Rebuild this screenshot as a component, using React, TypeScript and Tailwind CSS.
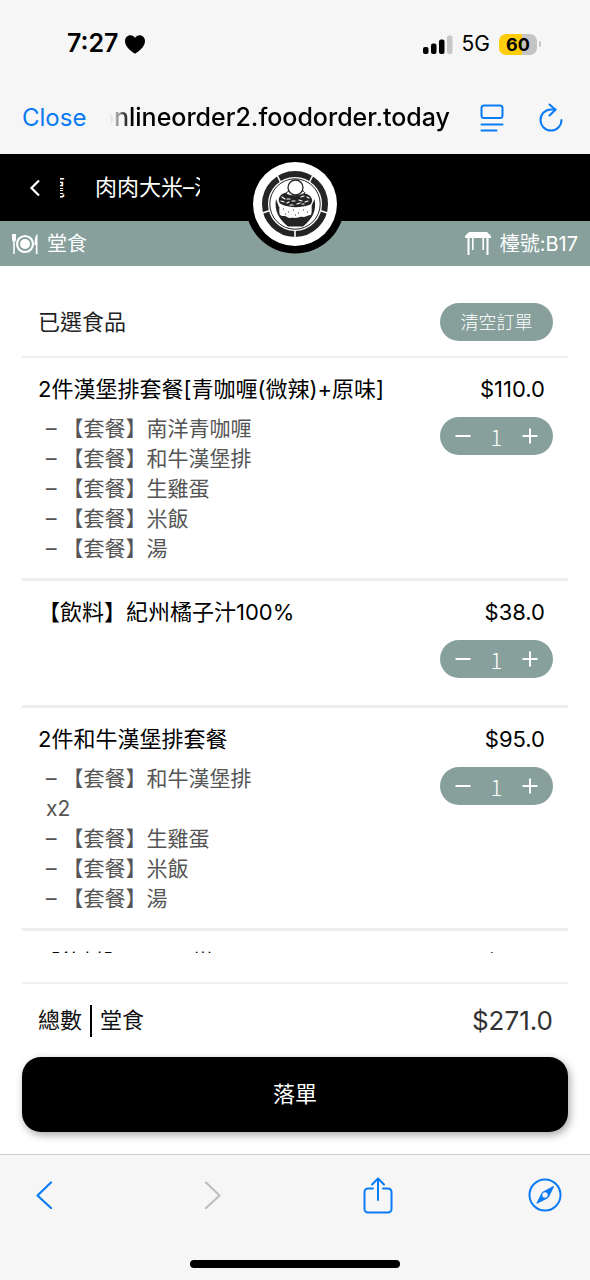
import { useState } from 'react';

type CartItem = {
  name: string;
  price: number;
  options: string[];
};

const ITEMS: CartItem[] = [
  {
    name: '2件漢堡排套餐[青咖喱(微辣)+原味]',
    price: 110,
    options: ['南洋青咖喱', '和牛漢堡排', '生雞蛋', '米飯', '湯'],
  },
  { name: '【飲料】紀州橘子汁100%', price: 38, options: [] },
  {
    name: '2件和牛漢堡排套餐',
    price: 95,
    options: ['和牛漢堡排 x2', '生雞蛋', '米飯', '湯'],
  },
  { name: '【飲料】可口可樂', price: 28, options: [] },
];

function StatusBar() {
  return (
    <div className="flex h-[88px] items-center justify-between pl-[67px] pr-[53px]">
      <div className="flex items-center gap-[6px] text-[25px] font-semibold text-black">
        <span>7:27</span>
        <svg width="20" height="19" viewBox="0 0 20 19" fill="currentColor" aria-hidden="true">
          <path d="M10 18.8C7.6 17 0 12.2 0 6.2 0 2.7 2.4.3 5.4.3c2 0 3.700 1 4.600 2.700C10.900 1.300 12.600.3 14.600.3c3 0 5.400 2.400 5.400 5.900 0 6-7.600 10.800-10 12.600Z" />
        </svg>
      </div>
      <div className="flex items-center">
        <svg width="30" height="19" viewBox="0 0 30 19" aria-hidden="true">
          <rect x="0" y="12" width="5.500" height="7" rx="2" />
          <rect x="8" y="8.500" width="5.500" height="10.500" rx="2" />
          <rect x="16" y="4.500" width="5.500" height="14.500" rx="2" />
          <rect x="24" y="0.500" width="5.500" height="18.500" rx="2" fill="#c6c6c6" />
        </svg>
        <span className="ml-[9px] text-[21px]">5G</span>
        <span className="relative ml-[9px] flex h-[21px] w-[38px] items-center justify-center rounded-[7px] bg-linear-to-r from-[#fdcc0a] from-60% to-[#c4c4c4] to-60% text-[18px] font-bold">
          60
          <span className="absolute -right-1 h-[6px] w-[2px] rounded-r-full bg-[#c4c4c4]" />
        </span>
      </div>
    </div>
  );
}

function AddressBar() {
  return (
    <div className="flex h-[66px] items-center pb-[7px] pl-[22px] pr-[26px] text-[#0b7bf5]">
      <button className="text-[24px]">Close</button>
      <div className="ml-6 flex min-w-0 flex-1 justify-end overflow-hidden text-[25px] font-medium text-black mask-[linear-gradient(to_right,transparent,black_20px)]">
        onlineorder2.foodorder.today
      </div>
      <button aria-label="Page menu" className="ml-[30px]">
        <svg width="24" height="28" viewBox="0 0 24 28" fill="none" stroke="currentColor" strokeWidth="2" strokeLinecap="round">
          <rect x="1.500" y="1.500" width="21" height="12.500" rx="2.500" />
          <path d="M1.500 20.500h21M1.500 26.500h15" />
        </svg>
      </button>
      <button aria-label="Reload" className="ml-[34px]">
        <svg width="26" height="30" viewBox="0 0 26 30" fill="none" stroke="currentColor" strokeWidth="2" strokeLinecap="round" strokeLinejoin="round">
          <path d="M23.500 17A10.500 10.500 0 1 1 13 6.500h4.500" />
          <path d="M11.500 1.500l6 5.200-6 5.800" />
        </svg>
      </button>
    </div>
  );
}

function Logo() {
  return (
    <svg className="absolute left-1/2 top-0 z-10 -translate-x-1/2" width="100" height="100" viewBox="0 0 100 100" aria-label="肉肉大米" role="img">
      <circle cx="50" cy="50" r="49.500" fill="#000" />
      <circle cx="50" cy="50" r="42" fill="#fff" />
      <circle cx="50" cy="50" r="30" fill="none" stroke="#242424" strokeWidth="6" />
      <circle cx="50" cy="50" r="25.200" fill="none" stroke="#242424" strokeWidth="1" />
      <path d="M50 76v8M25 56.500l-9 3M75 56.500l9 3M35.500 28l-4-8M64.500 28l4-8" stroke="#fff" strokeWidth="1.600" />
      <path d="M31 45c-2 12 3 20 12 27.500h15C67 65 72 57 69.500 45l-3.500 8-32 0Z" fill="#242424" />
      <path d="M35 49c-1 5-1 10 0 12 3 2 5 0 7 2 3 2 5 0 8 1 3 0 5-2 8-1 3 0 5-2 8-2 1-3 1-8 0-12Z" fill="#fff" />
      <path d="M36 41c-3 3-3 7 0 9 7 4 20 4 28 1 4-2 4-6 1-9-5-5-24-6-29-1Z" fill="#242424" />
      <g stroke="#fff" strokeWidth="1.200" strokeLinecap="round" fill="none">
        <path d="M37 43l3 2M36 47l3 1M42 49l2-1M45 51l3 0M47 47l3 0M52 50l3-1M54 46l3 1M60 48l3-1M62 43l2 1M59 42l-3 1M42 45l3 0M57 50l2 0" />
      </g>
      <path d="M41 40c1-3 4-4 10-4s8 1 9 3c-4 3-14 4-19 1Z" fill="#fff" stroke="#242424" />
      <circle cx="50.500" cy="33.500" r="7.500" fill="#fff" stroke="#242424" strokeWidth="1.300" />
      <path d="M38 55h1M43 58h1M48 56h1M53 59h1M58 56h1M62 58h1M40 60h1M50 61h1" stroke="#333" strokeWidth="1.200" />
    </svg>
  );
}

function ShopHeader() {
  return (
    <header className="relative text-white">
      <div className="flex h-[67px] items-center bg-black pl-7">
        <button aria-label="返回">
          <svg width="14" height="18" viewBox="0 0 14 18" fill="none" stroke="currentColor" strokeWidth="2.200">
            <path d="M11 1.500L3.500 9l7.500 7.500" />
          </svg>
        </button>
        <h1 className="ml-[18px] flex w-[140px] justify-between overflow-hidden whitespace-nowrap text-[22px] font-normal">
          <span className="flex w-[5px] shrink-0 justify-end overflow-hidden" aria-hidden="true">
            龍
          </span>
          <span className="w-[105px] shrink-0 overflow-hidden">肉肉大米–沙田</span>
        </h1>
      </div>
      <div className="flex h-[45px] items-center justify-between bg-[#87a09c] px-3 text-[20px]">
        <span className="flex items-center gap-[9px]">
          <svg width="26" height="22" viewBox="0 0 26 22" fill="none" stroke="currentColor" aria-hidden="true">
            <circle cx="13" cy="11" r="8" strokeWidth="2.200" />
            <circle cx="13" cy="11" r="5" fill="currentColor" stroke="none" />
            <path d="M0 1v5c0 2 .8 2.500 1.200 2.500V21h1.600V8.500C3.200 8.500 4 8 4 6V1Z" fill="currentColor" stroke="none" />
            <path d="M25.500 1c-2 1-3 5-3 11h1.300v9h1.700Z" fill="currentColor" stroke="none" />
          </svg>
          堂食
        </span>
        <span className="flex items-center gap-[9px]">
          <svg width="26" height="23" viewBox="0 0 26 23" fill="currentColor" aria-hidden="true">
            <path d="M4 0h18l4 4v2H0V4Z" />
            <path d="M2.500 6h2v17h-2ZM21.500 6h2v17h-2ZM7 6h1.600v12H7ZM17.400 6H19v12h-1.600Z" />
          </svg>
          檯號:B17
        </span>
      </div>
      <div className="absolute inset-x-0 top-0">
        <Logo />
      </div>
    </header>
  );
}

function Stepper({ name }: { name: string }) {
  const [count, setCount] = useState(1);
  return (
    <div className="mt-[13px] mb-[13px] flex h-[38px] w-[113px] items-center justify-between rounded-full bg-[#87a09c] px-[14px] text-white">
      <button aria-label={`減少 ${name}`} onClick={() => setCount(Math.max(0, count - 1))}>
        <svg width="18" height="18" viewBox="0 0 18 18" stroke="currentColor" strokeWidth="2">
          <path d="M1.500 9h15" />
        </svg>
      </button>
      <span className="font-['Noto_Sans_CJK_TC'] text-[22px] font-light leading-none">{count}</span>
      <button aria-label={`增加 ${name}`} onClick={() => setCount(count + 1)}>
        <svg width="18" height="18" viewBox="0 0 18 18" stroke="currentColor" strokeWidth="2">
          <path d="M1.500 9h15M9 1.500v15" />
        </svg>
      </button>
    </div>
  );
}

function ItemRow({ item }: { item: CartItem }) {
  return (
    <li className="flex justify-between border-b-3 border-[#eeeeee] pt-4 pb-[14px] pl-4 pr-[15px]">
      <div>
        <h3 className="text-[22px] leading-[30px] text-black">{item.name}</h3>
        {item.options.length > 0 && (
          <ul className="mt-[10px] ml-2 w-[220px] text-[21px] leading-[30px] text-[#555555]">
            {item.options.map((o) => (
              <li key={o}>{`– 【套餐】${o}`}</li>
            ))}
          </ul>
        )}
      </div>
      <div className="flex flex-col items-end">
        <span className="mr-2 text-[22px] leading-[30px] text-black">{`$${item.price.toFixed(1)}`}</span>
        <Stepper name={item.name} />
      </div>
    </li>
  );
}

function BrowserToolbar() {
  return (
    <footer className="border-t border-[#cfcfcf] bg-[#f6f6f6] text-[#0b7bf5]">
      <nav className="flex h-20 items-center justify-between px-7">
        <button aria-label="Back" className="flex w-[34px] justify-center">
          <svg width="18" height="28" viewBox="0 0 18 28" fill="none" stroke="currentColor" strokeWidth="2.200" strokeLinecap="round" strokeLinejoin="round">
            <path d="M15 1.500L1.500 14.500 15 27" />
          </svg>
        </button>
        <button aria-label="Forward" className="flex w-[34px] justify-center text-[#bfbfbf]" disabled>
          <svg width="18" height="28" viewBox="0 0 18 28" fill="none" stroke="currentColor" strokeWidth="2.200" strokeLinecap="round" strokeLinejoin="round">
            <path d="M3 1.500L16.500 14.500 3 27" />
          </svg>
        </button>
        <button aria-label="Share" className="flex w-[34px] justify-center">
          <svg width="30" height="37" viewBox="0 0 30 37" fill="none" stroke="currentColor" strokeWidth="2" strokeLinecap="round" strokeLinejoin="round">
            <path d="M10 11.500H5a3.500 3.500 0 0 0-3.500 3.500v17A3.500 3.500 0 0 0 5 35.500h20a3.500 3.500 0 0 0 3.500-3.500V15a3.500 3.500 0 0 0-3.500-3.500h-5" />
            <path d="M15 23V1.500M9 7.500l6-6 6 6" />
          </svg>
        </button>
        <button aria-label="Open in browser">
          <svg width="34" height="34" viewBox="0 0 34 34" fill="none" aria-hidden="true">
            <circle cx="17" cy="17" r="15.500" stroke="currentColor" strokeWidth="2" />
            <path fillRule="evenodd" fill="currentColor" d="M25 8.200c.7-.3 1.200.2.900.9l-5 9.800c-.3.600-.9 1.200-1.500 1.500l-9.900 5.200c-.7.300-1.200-.2-.9-.9l5-9.800c.3-.6.900-1.200 1.500-1.500ZM17 14.300a2.700 2.700 0 1 0 0 5.400 2.700 2.700 0 0 0 0-5.400Z" />
          </svg>
        </button>
      </nav>
      <div className="mx-auto mt-[25px] mb-3 h-2 w-[210px] rounded-full bg-black" />
    </footer>
  );
}

export default function App() {
  const total = ITEMS.reduce((sum, i) => sum + i.price, 0);

  return (
    <div className="flex h-screen flex-col bg-white font-[Inter,'Noto_Sans_CJK_TC',sans-serif]">
      <div className="bg-[#f6f6f6]">
        <StatusBar />
        <AddressBar />
      </div>
      <ShopHeader />

      <main className="flex min-h-0 flex-1 flex-col px-[22px]">
        <div className="flex items-center justify-between border-b-2 border-[#eeeeee] pt-[37px] pb-[15px] pl-4 pr-[15px]">
          <h2 className="text-[22px] font-normal text-[#222222]">已選食品</h2>
          <button className="h-[38px] w-[113px] rounded-full bg-[#87a09c] text-[18px] font-light text-white">
            清空訂單
          </button>
        </div>

        <ul className="mb-[29px] min-h-0 flex-1 overflow-y-auto [scrollbar-width:none]">
          {ITEMS.map((item) => (
            <ItemRow key={item.name} item={item} />
          ))}
        </ul>

        <div className="border-t-2 border-[#f0f0f0] pb-[22px]">
          <div className="flex h-[73px] items-center justify-between pl-4 pr-[15px]">
            <span className="flex items-center gap-2 text-[22px] text-[#111111]">
              總數
              <span className="h-8 w-[2px] bg-black" />
              堂食
            </span>
            <span className="text-[26px] text-[#333333]">{`$${total.toFixed(1)}`}</span>
          </div>
          <button className="h-[75px] w-full rounded-[19px] bg-black text-[22px] text-white shadow-[2px_3px_8px_rgba(0,0,0,0.35)]">
            落單
          </button>
        </div>
      </main>

      <BrowserToolbar />
    </div>
  );
}
